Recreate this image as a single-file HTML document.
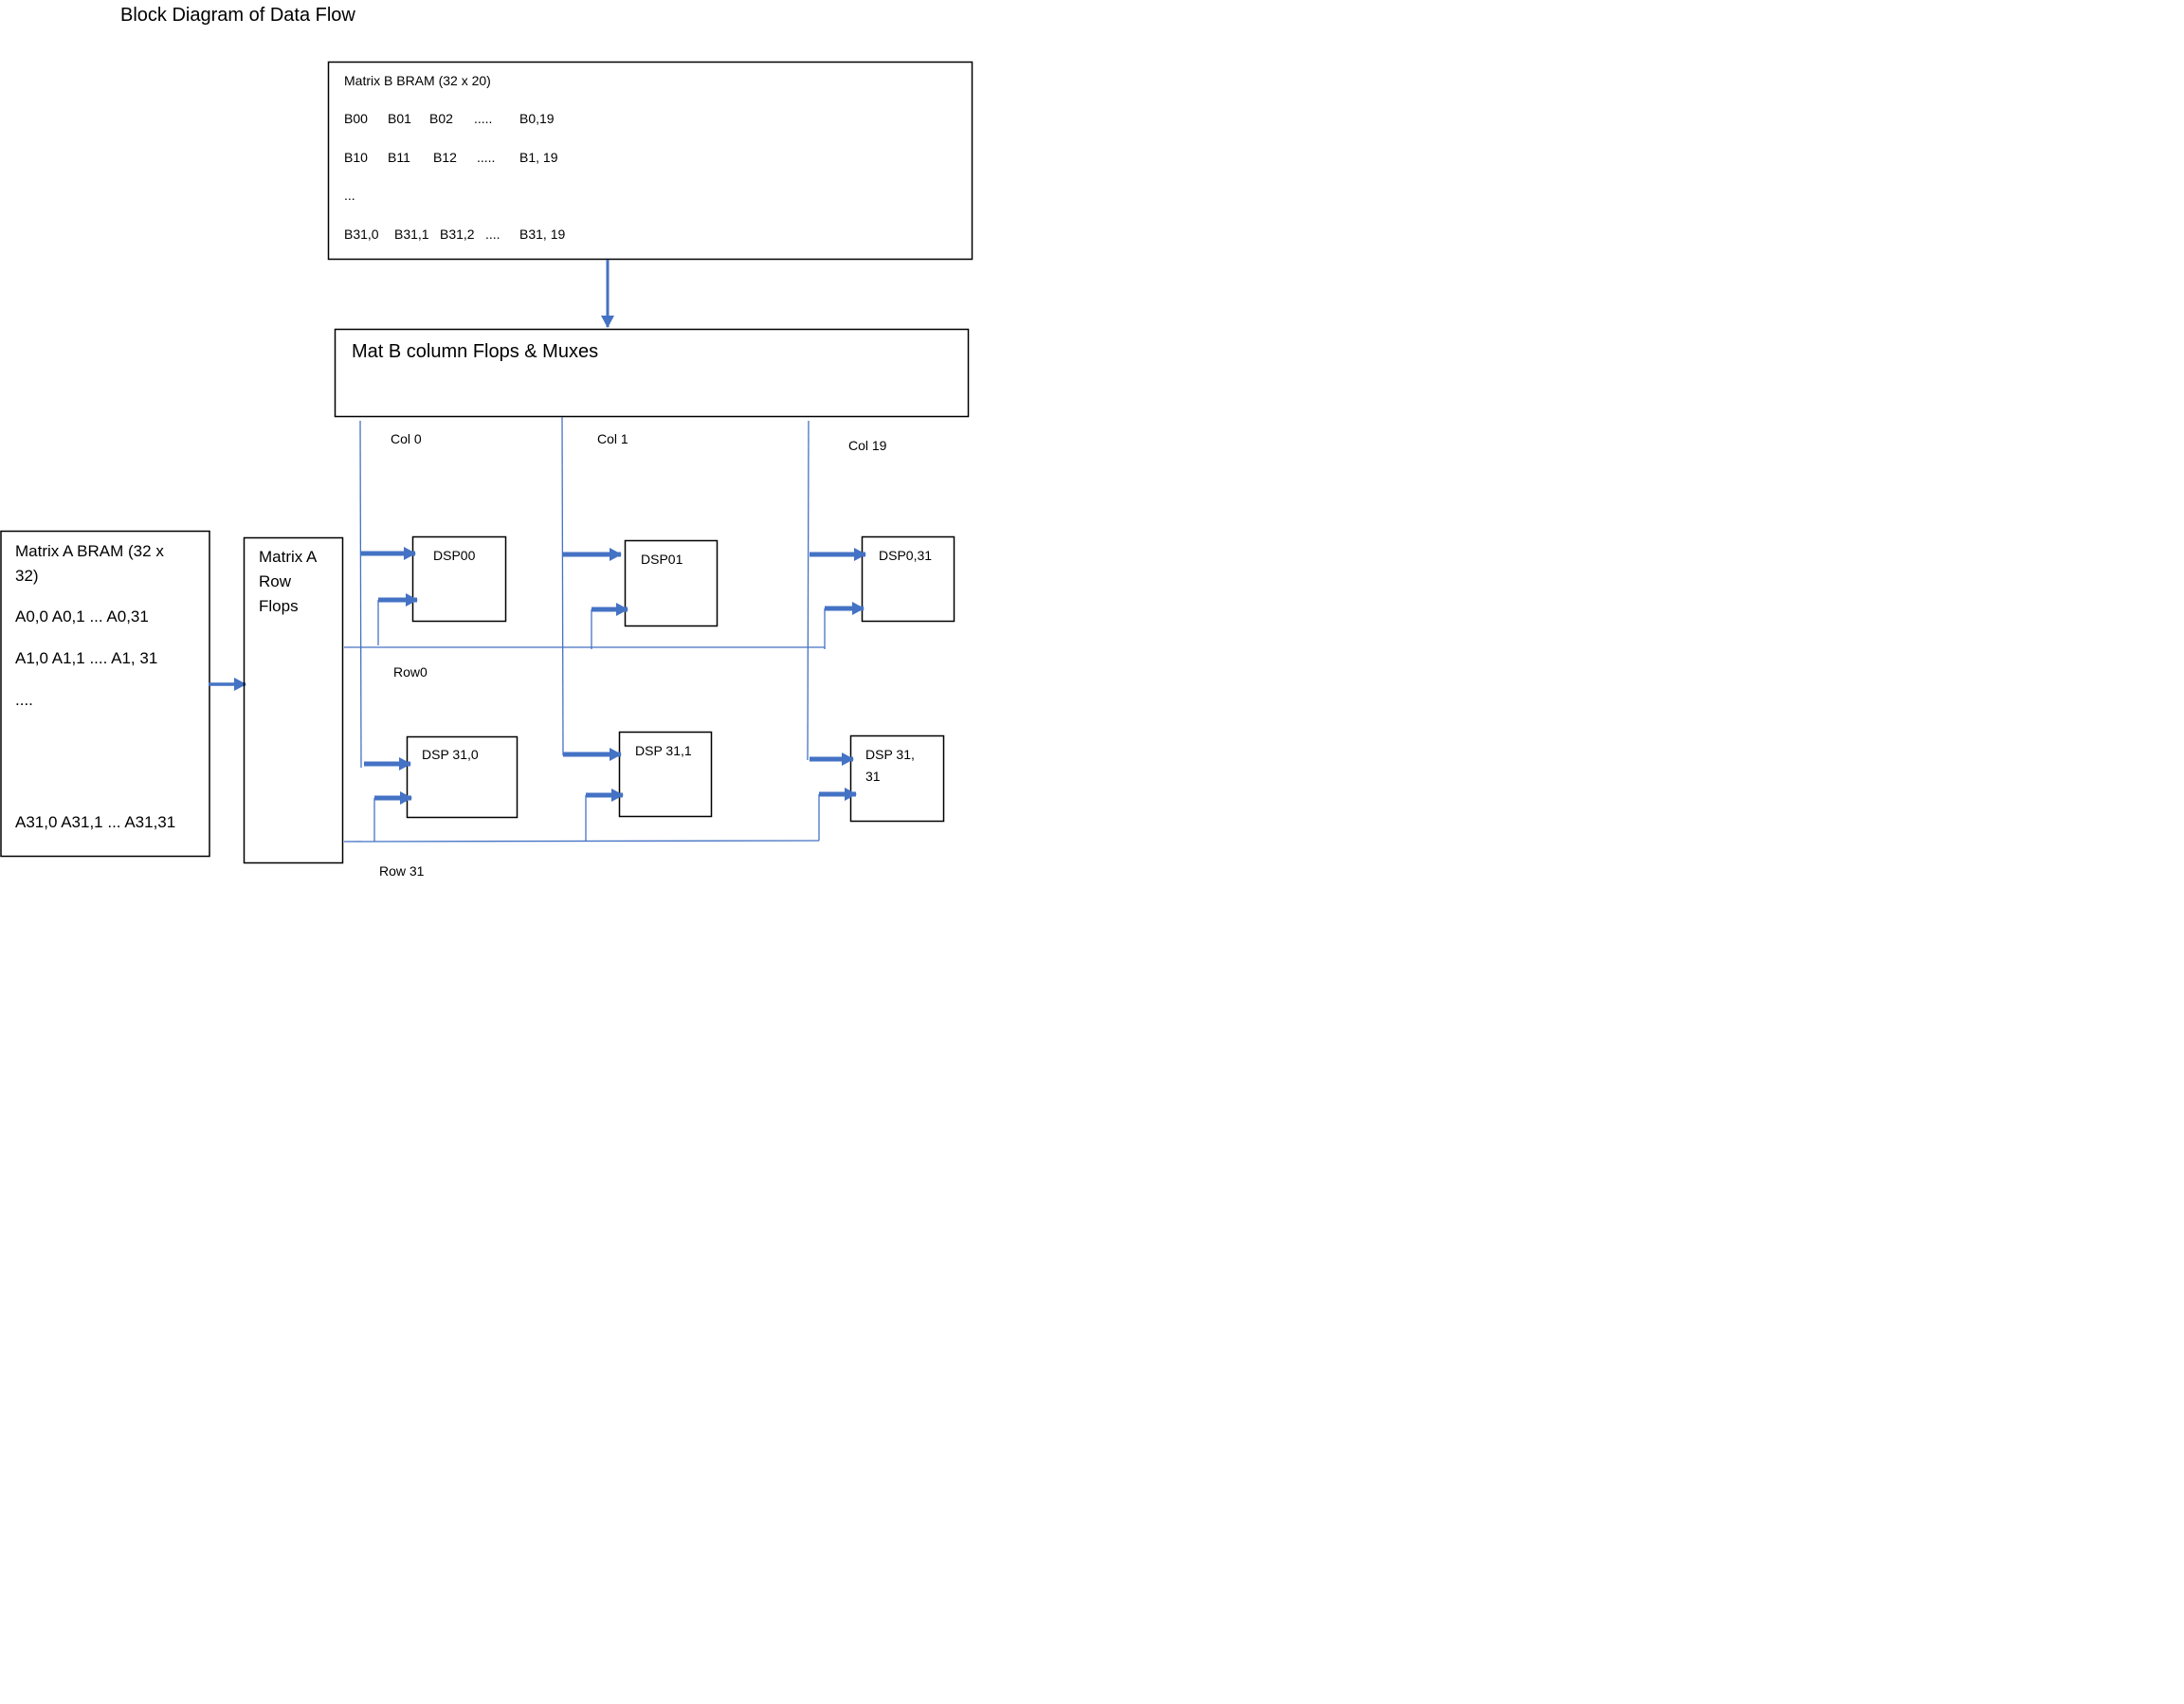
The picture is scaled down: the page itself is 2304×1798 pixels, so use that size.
<!DOCTYPE html>
<html><head><meta charset="utf-8"><style>
html,body{margin:0;padding:0;background:#fff;width:2304px;height:1798px;overflow:hidden}
svg{display:block}
text{font-family:"Liberation Sans",sans-serif;fill:#000}
.s{font-size:14px}
.m{font-size:17px}
</style></head><body>
<svg width="2304" height="1798" viewBox="0 0 2304 1798" xmlns="http://www.w3.org/2000/svg">
<defs>
<marker id="ah" markerWidth="14" markerHeight="16" refX="12" refY="8" orient="auto" markerUnits="userSpaceOnUse">
<path d="M0,1 L13,8 L0,15 z" fill="#4472C4"/>
</marker>
</defs>
<text x="127" y="22" style="font-size:20px">Block Diagram of Data Flow</text>

<rect x="346.5" y="65.5" width="679" height="208" fill="none" stroke="#000" stroke-width="1.5"/>
<g class="s">
<text x="363" y="90">Matrix B BRAM (32 x 20)</text>
<text x="363" y="130">B00</text><text x="409" y="130">B01</text><text x="453" y="130">B02</text><text x="500" y="130">.....</text><text x="548" y="130">B0,19</text>
<text x="363" y="171">B10</text><text x="409" y="171">B11</text><text x="457" y="171">B12</text><text x="503" y="171">.....</text><text x="548" y="171">B1, 19</text>
<text x="363" y="211">...</text>
<text x="363" y="252">B31,0</text><text x="416" y="252">B31,1</text><text x="464" y="252">B31,2</text><text x="512" y="252">....</text><text x="548" y="252">B31, 19</text>
</g>
<line x1="641" y1="274" x2="641" y2="345" stroke="#4472C4" stroke-width="3" marker-end="url(#ah)"/>

<rect x="353.5" y="347.5" width="668" height="92" fill="none" stroke="#000" stroke-width="1.5"/>
<text x="371" y="377" style="font-size:20px">Mat B column Flops &amp; Muxes</text>

<g stroke="#4472C4" stroke-width="1.3" fill="none">
<line x1="380" y1="444" x2="381" y2="810"/>
<line x1="593" y1="440" x2="594" y2="797"/>
<line x1="853" y1="444" x2="852" y2="802"/>
<line x1="363" y1="683" x2="870" y2="683"/>
<line x1="363" y1="888" x2="864" y2="887"/>
<line x1="399" y1="633" x2="399" y2="681"/>
<line x1="624" y1="643" x2="624" y2="685"/>
<line x1="870" y1="642" x2="870" y2="685"/>
<line x1="395" y1="842" x2="395" y2="888"/>
<line x1="618" y1="839" x2="618" y2="888"/>
<line x1="864" y1="838" x2="864" y2="887"/>
</g>

<g class="s">
<text x="412" y="468">Col 0</text>
<text x="630" y="468">Col 1</text>
<text x="895" y="475">Col 19</text>
<text x="415" y="714">Row0</text>
<text x="400" y="924">Row 31</text>
</g>

<rect x="1" y="560.5" width="220" height="343" fill="none" stroke="#000" stroke-width="1.5"/>
<g class="m">
<text x="16" y="587">Matrix A BRAM (32 x</text>
<text x="16" y="613">32)</text>
<text x="16" y="656">A0,0  A0,1  ... A0,31</text>
<text x="16" y="700">A1,0  A1,1  .... A1, 31</text>
<text x="16" y="744">....</text>
<text x="16" y="873">A31,0  A31,1 ... A31,31</text>
</g>
<line x1="220" y1="722" x2="259" y2="722" stroke="#4472C4" stroke-width="3.5" marker-end="url(#ah)"/>

<rect x="257.5" y="567.5" width="104" height="343" fill="none" stroke="#000" stroke-width="1.5"/>
<g class="m">
<text x="273" y="593">Matrix A</text>
<text x="273" y="619">Row</text>
<text x="273" y="645">Flops</text>
</g>

<g fill="none" stroke="#000" stroke-width="1.5">
<rect x="435.5" y="566.5" width="98" height="89"/>
<rect x="659.5" y="570.5" width="97" height="90"/>
<rect x="909.5" y="566.5" width="97" height="89"/>
<rect x="429.5" y="777.5" width="116" height="85"/>
<rect x="653.5" y="772.5" width="97" height="89"/>
<rect x="897.5" y="776.5" width="98" height="90"/>
</g>
<g class="s">
<text x="457" y="591">DSP00</text>
<text x="676" y="595">DSP01</text>
<text x="927" y="591">DSP0,31</text>
<text x="445" y="801">DSP 31,0</text>
<text x="670" y="797">DSP 31,1</text>
<text x="913" y="801">DSP 31,</text>
<text x="913" y="824">31</text>
</g>

<g stroke="#4472C4" stroke-width="5" marker-end="url(#ah)">
<line x1="380" y1="584" x2="438" y2="584"/>
<line x1="399" y1="633" x2="440" y2="633"/>
<line x1="594" y1="585" x2="655" y2="585"/>
<line x1="624" y1="643" x2="662" y2="643"/>
<line x1="854" y1="585" x2="913" y2="585"/>
<line x1="870" y1="642" x2="911" y2="642"/>
<line x1="384" y1="806" x2="433" y2="806"/>
<line x1="395" y1="842" x2="434" y2="842"/>
<line x1="594" y1="796" x2="655" y2="796"/>
<line x1="618" y1="839" x2="657" y2="839"/>
<line x1="854" y1="801" x2="900" y2="801"/>
<line x1="864" y1="838" x2="903" y2="838"/>
</g>
</svg>
</body></html>
